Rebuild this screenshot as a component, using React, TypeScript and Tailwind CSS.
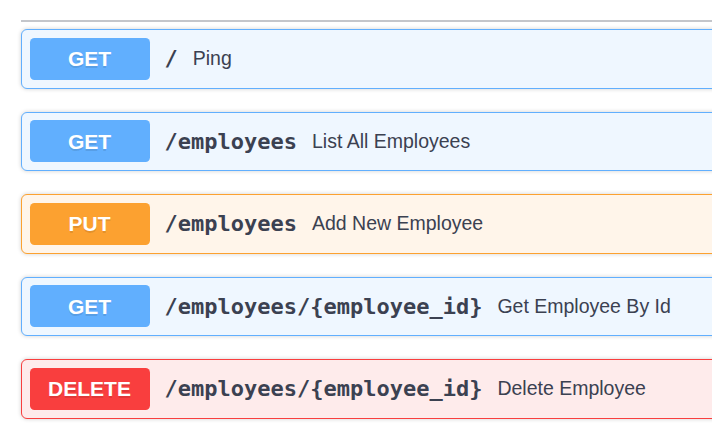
type Op = {
  method: "GET" | "PUT" | "DELETE";
  path: string;
  summary: string;
};

const ops: Op[] = [
  { method: "GET", path: "/", summary: "Ping" },
  { method: "GET", path: "/employees", summary: "List All Employees" },
  { method: "PUT", path: "/employees", summary: "Add New Employee" },
  { method: "GET", path: "/employees/{employee_id}", summary: "Get Employee By Id" },
  { method: "DELETE", path: "/employees/{employee_id}", summary: "Delete Employee" },
];

const blockStyles: Record<Op["method"], { block: string; badge: string }> = {
  GET: { block: "border-[#61affe] bg-[#eff7ff]", badge: "bg-[#61affe]" },
  PUT: { block: "border-[#fca130] bg-[#fff5ea]", badge: "bg-[#fca130]" },
  DELETE: { block: "border-[#f93e3e] bg-[#feebeb]", badge: "bg-[#f93e3e]" },
};

function OpBlock({ op }: { op: Op }) {
  const s = blockStyles[op.method];
  return (
    <div
      className={[
        "flex h-[59.5px] items-center rounded-[6px] border-[1.5px] pl-[7.5px] shadow-[0_0_4.5px_rgba(0,0,0,0.19)]",
        s.block,
      ].join(" ")}
    >
      <span
        className={[
          "flex h-[42px] w-[120px] shrink-0 items-center justify-center rounded-[4.5px] font-['Liberation_Sans',Arial,sans-serif] text-[21px] font-bold text-white [text-shadow:0_1.5px_0_rgba(0,0,0,0.1)]",
          s.badge,
        ].join(" ")}
      >
        {op.method}
      </span>
      <span className="px-[15px] font-['DejaVu_Sans_Mono',monospace] text-[22px] font-bold text-[#3b4151]">
        {op.path}
      </span>
      <span className="font-['Liberation_Sans',Arial,sans-serif] text-[19.5px] text-[#3b4151]">
        {op.summary}
      </span>
    </div>
  );
}

export default function App() {
  return (
    <div className="h-[441px] w-[712px] overflow-hidden bg-white">
      <div className="w-[760px] pl-[21px] pt-[20px]">
        <div className="h-[1.5px] bg-[#c4c6cb]" />
        <div className="mt-[7.5px] flex flex-col gap-[23px]">
          {ops.map((op, i) => (
            <OpBlock key={i} op={op} />
          ))}
        </div>
      </div>
    </div>
  );
}
